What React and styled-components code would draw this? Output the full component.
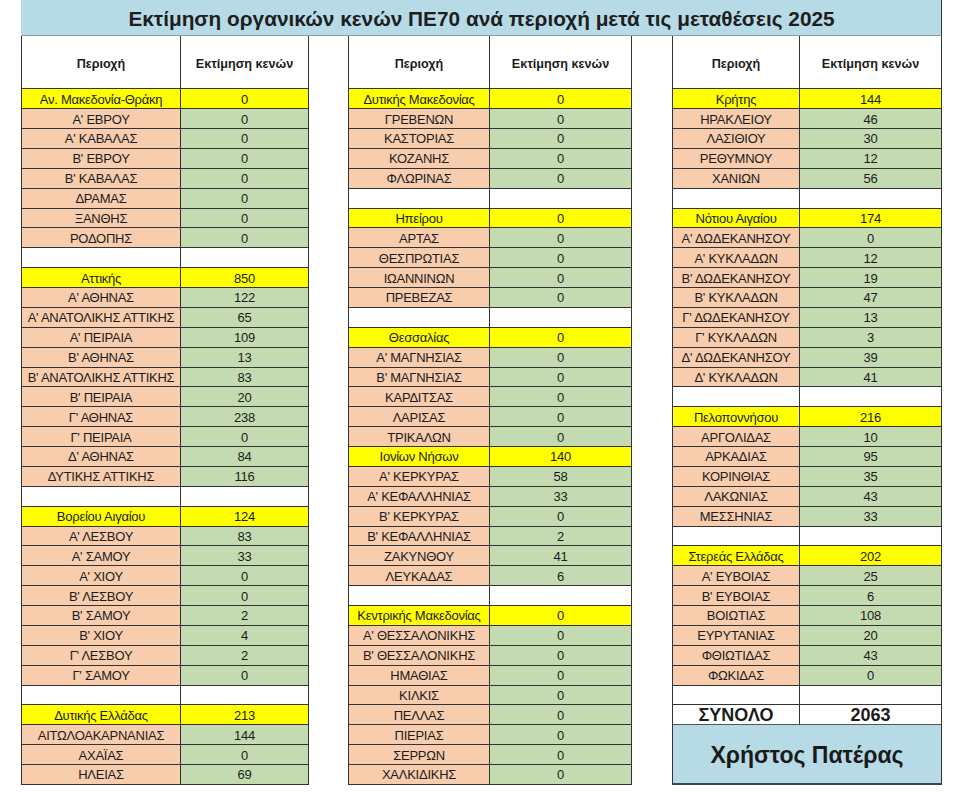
import React from "react";
import styled, { createGlobalStyle } from "styled-components";

const GlobalStyle = createGlobalStyle`
  body {
    margin: 0;
    background: #ffffff;
    font-family: "Liberation Sans", "Noto Sans", sans-serif;
    color: #1c1c1c;
  }
`;

const left = [
  ["Αν. Μακεδονία-Θράκη", "0", "region"],
  ["Α' ΕΒΡΟΥ", "0"],
  ["Α' ΚΑΒΑΛΑΣ", "0"],
  ["Β' ΕΒΡΟΥ", "0"],
  ["Β' ΚΑΒΑΛΑΣ", "0"],
  ["ΔΡΑΜΑΣ", "0"],
  ["ΞΑΝΘΗΣ", "0"],
  ["ΡΟΔΟΠΗΣ", "0"],
  null,
  ["Αττικής", "850", "region"],
  ["Α' ΑΘΗΝΑΣ", "122"],
  ["Α' ΑΝΑΤΟΛΙΚΗΣ ΑΤΤΙΚΗΣ", "65"],
  ["Α' ΠΕΙΡΑΙΑ", "109"],
  ["Β' ΑΘΗΝΑΣ", "13"],
  ["Β' ΑΝΑΤΟΛΙΚΗΣ ΑΤΤΙΚΗΣ", "83"],
  ["Β' ΠΕΙΡΑΙΑ", "20"],
  ["Γ' ΑΘΗΝΑΣ", "238"],
  ["Γ' ΠΕΙΡΑΙΑ", "0"],
  ["Δ' ΑΘΗΝΑΣ", "84"],
  ["ΔΥΤΙΚΗΣ ΑΤΤΙΚΗΣ", "116"],
  null,
  ["Βορείου Αιγαίου", "124", "region"],
  ["Α' ΛΕΣΒΟΥ", "83"],
  ["Α' ΣΑΜΟΥ", "33"],
  ["Α' ΧΙΟΥ", "0"],
  ["Β' ΛΕΣΒΟΥ", "0"],
  ["Β' ΣΑΜΟΥ", "2"],
  ["Β' ΧΙΟΥ", "4"],
  ["Γ' ΛΕΣΒΟΥ", "2"],
  ["Γ' ΣΑΜΟΥ", "0"],
  null,
  ["Δυτικής Ελλάδας", "213", "region"],
  ["ΑΙΤΩΛΟΑΚΑΡΝΑΝΙΑΣ", "144"],
  ["ΑΧΑΪΑΣ", "0"],
  ["ΗΛΕΙΑΣ", "69"],
];

const middle = [
  ["Δυτικής Μακεδονίας", "0", "region"],
  ["ΓΡΕΒΕΝΩΝ", "0"],
  ["ΚΑΣΤΟΡΙΑΣ", "0"],
  ["ΚΟΖΑΝΗΣ", "0"],
  ["ΦΛΩΡΙΝΑΣ", "0"],
  null,
  ["Ηπείρου", "0", "region"],
  ["ΑΡΤΑΣ", "0"],
  ["ΘΕΣΠΡΩΤΙΑΣ", "0"],
  ["ΙΩΑΝΝΙΝΩΝ", "0"],
  ["ΠΡΕΒΕΖΑΣ", "0"],
  null,
  ["Θεσσαλίας", "0", "region"],
  ["Α' ΜΑΓΝΗΣΙΑΣ", "0"],
  ["Β' ΜΑΓΝΗΣΙΑΣ", "0"],
  ["ΚΑΡΔΙΤΣΑΣ", "0"],
  ["ΛΑΡΙΣΑΣ", "0"],
  ["ΤΡΙΚΑΛΩΝ", "0"],
  ["Ιονίων Νήσων", "140", "region"],
  ["Α' ΚΕΡΚΥΡΑΣ", "58"],
  ["Α' ΚΕΦΑΛΛΗΝΙΑΣ", "33"],
  ["Β' ΚΕΡΚΥΡΑΣ", "0"],
  ["Β' ΚΕΦΑΛΛΗΝΙΑΣ", "2"],
  ["ΖΑΚΥΝΘΟΥ", "41"],
  ["ΛΕΥΚΑΔΑΣ", "6"],
  null,
  ["Κεντρικής Μακεδονίας", "0", "region"],
  ["Α' ΘΕΣΣΑΛΟΝΙΚΗΣ", "0"],
  ["Β' ΘΕΣΣΑΛΟΝΙΚΗΣ", "0"],
  ["ΗΜΑΘΙΑΣ", "0"],
  ["ΚΙΛΚΙΣ", "0"],
  ["ΠΕΛΛΑΣ", "0"],
  ["ΠΙΕΡΙΑΣ", "0"],
  ["ΣΕΡΡΩΝ", "0"],
  ["ΧΑΛΚΙΔΙΚΗΣ", "0"],
];

const right = [
  ["Κρήτης", "144", "region"],
  ["ΗΡΑΚΛΕΙΟΥ", "46"],
  ["ΛΑΣΙΘΙΟΥ", "30"],
  ["ΡΕΘΥΜΝΟΥ", "12"],
  ["ΧΑΝΙΩΝ", "56"],
  null,
  ["Νότιου Αιγαίου", "174", "region"],
  ["Α' ΔΩΔΕΚΑΝΗΣΟΥ", "0"],
  ["Α' ΚΥΚΛΑΔΩΝ", "12"],
  ["Β' ΔΩΔΕΚΑΝΗΣΟΥ", "19"],
  ["Β' ΚΥΚΛΑΔΩΝ", "47"],
  ["Γ' ΔΩΔΕΚΑΝΗΣΟΥ", "13"],
  ["Γ' ΚΥΚΛΑΔΩΝ", "3"],
  ["Δ' ΔΩΔΕΚΑΝΗΣΟΥ", "39"],
  ["Δ' ΚΥΚΛΑΔΩΝ", "41"],
  null,
  ["Πελοποννήσου", "216", "region"],
  ["ΑΡΓΟΛΙΔΑΣ", "10"],
  ["ΑΡΚΑΔΙΑΣ", "95"],
  ["ΚΟΡΙΝΘΙΑΣ", "35"],
  ["ΛΑΚΩΝΙΑΣ", "43"],
  ["ΜΕΣΣΗΝΙΑΣ", "33"],
  null,
  ["Στερεάς Ελλάδας", "202", "region"],
  ["Α' ΕΥΒΟΙΑΣ", "25"],
  ["Β' ΕΥΒΟΙΑΣ", "6"],
  ["ΒΟΙΩΤΙΑΣ", "108"],
  ["ΕΥΡΥΤΑΝΙΑΣ", "20"],
  ["ΦΘΙΩΤΙΔΑΣ", "43"],
  ["ΦΩΚΙΔΑΣ", "0"],
  null,
];

const Page = styled.div`
  width: 960px;
  height: 801px;
  padding: 0 0 0 21px;
  box-sizing: border-box;
  overflow: hidden;
`;

const TitleBar = styled.div`
  width: 921px;
  height: 36px;
  box-sizing: border-box;
  background: #b6dbe6;
  border-right: 1px solid #3a3a3a;
  border-left: 1px solid #b6dbe6;
  border-bottom: 1px solid #8a9ea4;
  display: flex;
  align-items: center;
  justify-content: center;
  font-size: 20.8px;
  font-weight: 700;
  color: #1e1e1e;
  padding-top: 2px;
`;

const Tables = styled.div`
  display: grid;
  grid-template-columns: 287px 284px 270px;
  column-gap: 40px;
  width: 921px;
`;

const Sheet = styled.div`
  display: grid;
  grid-template-columns: ${(p) => p.$cols};
  grid-template-rows: 53.3px;
  grid-auto-rows: 19.88px;
  border-left: 1px solid #333;
`;

const bg = {
  head: "#ffffff",
  region: "#ffff00",
  name: "#f7cdae",
  value: "#c4dab0",
  blank: "#ffffff",
};

const Cell = styled.div`
  box-sizing: border-box;
  background: ${(p) => bg[p.$kind]};
  border-right: 1px solid #333;
  border-bottom: 1px solid #333;
  display: flex;
  align-items: center;
  justify-content: center;
  font-size: ${(p) => (p.$kind === "head" ? "12.6px" : "13px")};
  font-weight: ${(p) => (p.$kind === "head" ? 700 : 400)};
  letter-spacing: ${(p) => (p.$kind === "head" ? "0" : "-0.25px")};
  white-space: nowrap;
  overflow: hidden;
  padding-top: ${(p) => (p.$kind === "head" ? "4px" : "1px")};
`;

const TotalCell = styled(Cell)`
  font-size: 18px;
  font-weight: 700;
  letter-spacing: 0;
  background: #ffffff;
  border-bottom: 1px solid #555;
`;

const Author = styled.div`
  grid-column: 1 / span 2;
  grid-row: span 3;
  box-sizing: border-box;
  background: #b6dbe6;
  border-right: 1px solid #333;
  border-bottom: 2px solid #3c4a50;
  display: flex;
  align-items: center;
  justify-content: center;
  font-size: 23px;
  font-weight: 700;
  color: #1a1a1a;
  padding-top: 2px;
`;

const Table = ({ rows, cols, children }) => (
  <Sheet $cols={cols}>
    <Cell $kind="head">Περιοχή</Cell>
    <Cell $kind="head">Εκτίμηση κενών</Cell>
    {rows.map((r, i) =>
      r === null ? (
        <React.Fragment key={i}>
          <Cell $kind="blank" />
          <Cell $kind="blank" />
        </React.Fragment>
      ) : (
        <React.Fragment key={i}>
          <Cell $kind={r[2] ? "region" : "name"}>{r[0]}</Cell>
          <Cell $kind={r[2] ? "region" : "value"}>{r[1]}</Cell>
        </React.Fragment>
      )
    )}
    {children}
  </Sheet>
);

export default function App() {
  return (
    <>
      <GlobalStyle />
      <Page>
        <TitleBar>
          Εκτίμηση οργανικών κενών ΠΕ70 ανά περιοχή μετά τις μεταθέσεις 2025
        </TitleBar>
        <Tables>
          <Table rows={left} cols="159px 128px" />
          <Table rows={middle} cols="141px 142px" />
          <Table rows={right} cols="127px 142px">
            <TotalCell $kind="blank">ΣΥΝΟΛΟ</TotalCell>
            <TotalCell $kind="blank">2063</TotalCell>
            <Author>Χρήστος Πατέρας</Author>
          </Table>
        </Tables>
      </Page>
    </>
  );
}
